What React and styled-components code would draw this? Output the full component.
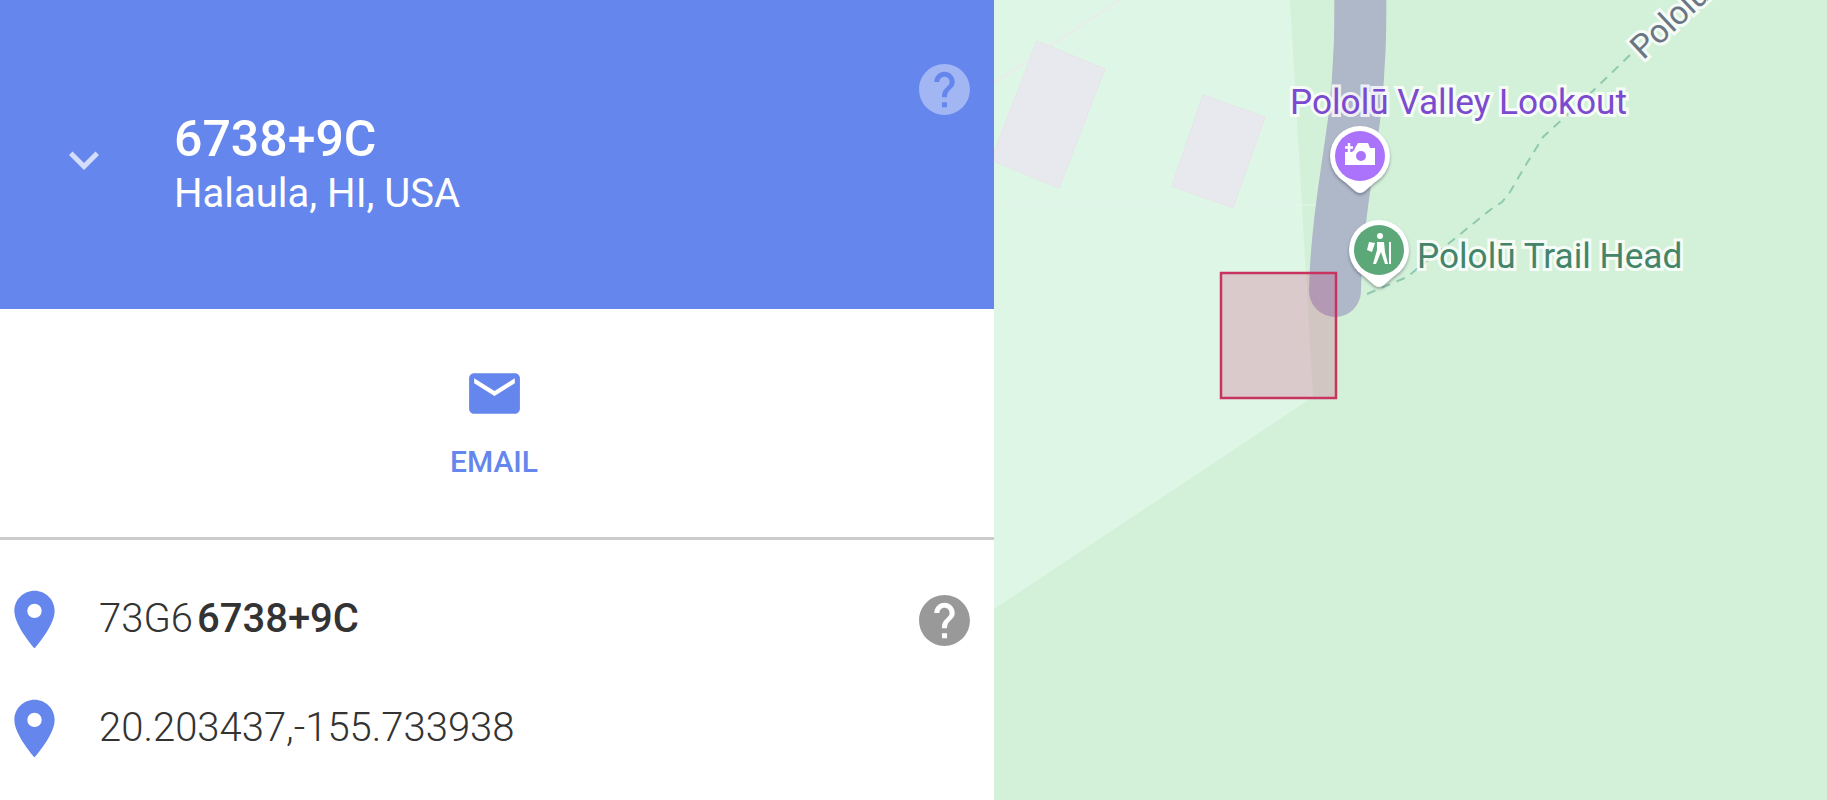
import React from "react"
import styled, { createGlobalStyle } from "styled-components"
import { MdEmail, MdExpandMore, MdHelp, MdPlace } from "react-icons/md"

const GlobalStyle = createGlobalStyle`
  html, body {
    margin: 0;
    padding: 0;
    background: #fff;
    overflow: hidden;
  }
  body {
    font-family: Roboto, "Liberation Sans", sans-serif;
  }
`

const Page = styled.div`
  display: flex;
  width: 1827px;
  height: 800px;
`

const Panel = styled.section`
  display: flex;
  flex-direction: column;
  flex: 0 0 994px;
  background: #fff;
`

const Header = styled.header`
  display: flex;
  align-items: center;
  height: 309px;
  background: #6586ec;
  color: #fff;
`

const Chevron = styled(MdExpandMore)`
  flex: none;
  margin: 10px 0 0 54px;
  color: rgba(255, 255, 255, 0.72);
`

const Titles = styled.div`
  flex: 1;
  margin: 20px 0 0 60px;
`

const Title = styled.h1`
  margin: 0;
  font-size: 50px;
  line-height: 58px;
  font-weight: 500;
`

const Subtitle = styled.div`
  font-size: 40px;
  line-height: 52px;
  font-weight: 400;
`

const Help = styled(MdHelp)`
  flex: none;
  margin-right: 19px;
  color: ${(p) => (p.$light ? "rgba(255, 255, 255, 0.4)" : "#999")};
  align-self: ${(p) => (p.$light ? "flex-start" : "center")};
  margin-top: ${(p) => (p.$light ? "59px" : "1px")};
`

const Actions = styled.div`
  display: flex;
  flex-direction: column;
  align-items: center;
  height: 231px;
  padding: 54px 6px 0 0;
  box-sizing: border-box;
  border-bottom: 3px solid #ccc;
`

const MailIcon = styled(MdEmail)`
  color: #6586ec;
`

const ActionLabel = styled.span`
  margin-top: 20px;
  color: #6586ec;
  font-size: 30px;
  line-height: 36px;
  font-weight: 500;
`

const Rows = styled.div`
  display: flex;
  flex-direction: column;
  padding-top: 25px;
`

const Row = styled.div`
  display: flex;
  align-items: center;
  height: 109px;
`

const RowPin = styled(MdPlace)`
  flex: none;
  color: #6586ec;
`

const RowText = styled.div`
  flex: 1;
  margin: 0 0 2px 30px;
  color: #333;
  font-size: 40px;
  font-weight: 300;
  white-space: nowrap;

  b {
    font-weight: 500;
    margin-left: 4px;
  }
`

const Map = styled.div`
  position: relative;
  flex: 1;
  height: 800px;
  overflow: hidden;
  background: #d3f1d9;
`

const MapDrawing = styled.svg`
  display: block;
  width: 833px;
  height: 800px;
`

const PinShadow = styled.g`
  filter: drop-shadow(0 2px 1.5px rgba(50, 50, 70, 0.4));
`

const MapLabel = styled.span`
  position: absolute;
  left: ${(p) => p.$x}px;
  top: ${(p) => p.$y}px;
  color: ${(p) => p.$color};
  font-size: ${(p) => p.$size}px;
  line-height: 36px;
  white-space: nowrap;
  -webkit-text-stroke: 6px rgba(255, 255, 255, 0.8);
  paint-order: stroke fill;
  transform-origin: 0 27px;
  transform: rotate(${(p) => p.$angle || 0}deg);
`

const MapPin = ({ cx, cy, color, children }) => (
  <g>
    <PinShadow>
      <circle cx={cx} cy={cy} r="30" fill="#fff" />
      <path
        d={`M${cx - 22} ${cy + 20} L${cx - 5} ${cy + 35} Q${cx} ${cy + 39} ${cx + 5} ${cy + 35} L${cx + 22} ${cy + 20} Z`}
        fill="#fff"
      />
    </PinShadow>
    <circle cx={cx} cy={cy} r="25" fill={color} />
    {children}
  </g>
)

const App = () => (
  <Page>
    <GlobalStyle />
    <Panel>
      <Header>
        <Chevron size={60} />
        <Titles>
          <Title>6738+9C</Title>
          <Subtitle>Halaula, HI, USA</Subtitle>
        </Titles>
        <Help size={61} $light />
      </Header>
      <Actions>
        <MailIcon size={61} />
        <ActionLabel>EMAIL</ActionLabel>
      </Actions>
      <Rows>
        <Row>
          <RowPin size={69} />
          <RowText>
            73G6<b>6738+9C</b>
          </RowText>
          <Help size={61} />
        </Row>
        <Row>
          <RowPin size={69} />
          <RowText>20.203437,-155.733938</RowText>
        </Row>
      </Rows>
    </Panel>
    <Map>
      <MapDrawing viewBox="994 0 833 800">
        {/* lighter ground on the left */}
        <path d="M994 0 H1290 L1313 397 L994 609 Z" fill="#def6e6" />
        <path d="M994 205 H1370" stroke="#e6f5ea" strokeWidth="1" />
        <path d="M994 83 L1120 0" stroke="#e9ece8" strokeWidth="2" />
        {/* buildings */}
        <path d="M1037 41 L1105 69 L1059 188 L991 160 Z" fill="#e8e9ef" stroke="#e8e4e8" />
        <path d="M1203 95 L1265 117 L1233 208 L1172 186 Z" fill="#e8e9ef" stroke="#e8e4e8" />
        {/* road */}
        <path
          d="M1360 -30 C1361 30 1360 70 1354 120 C1349 160 1336 230 1335 291"
          fill="none"
          stroke="#aeb8c8"
          strokeWidth="52"
          strokeLinecap="round"
        />
        {/* trail */}
        <path
          d="M1367 294 L1407 277 L1453 240 L1490 210 L1502 202 L1510 192 L1527 163 L1543 137 L1567 115 L1597 87 L1633 52"
          fill="none"
          stroke="#8fc9b0"
          strokeWidth="2"
          strokeDasharray="9 7"
        />
        {/* selected square */}
        <rect
          x="1221"
          y="273"
          width="115"
          height="125"
          fill="rgba(205, 30, 100, 0.2)"
          stroke="#c9335f"
          strokeWidth="2.500"
        />
        <MapPin cx={1360} cy={156} color="#ab73fb">
          <path
            d="M1345 152 H1352 A5 5 0 0 0 1355 148 L1358 143 H1368 L1370 148 H1375 V165 H1345 Z"
            fill="#fff"
          />
          <path d="M1349 143 V152 M1345 147.500 H1353" stroke="#fff" strokeWidth="2.500" />
          <circle cx="1361" cy="156" r="5" fill="#ab73fb" />
        </MapPin>
        <MapPin cx={1379} cy={250} color="#5ca878">
          <circle cx="1380" cy="236" r="3" fill="#fff" />
          <path d="M1369 242 L1375 243 L1372 252 L1367 250 Z" fill="#fff" />
          <path
            d="M1377 242 H1384 L1385 252 L1388 264 H1385 L1381 252 L1376 264 H1373 L1377 250 Z"
            fill="#fff"
          />
          <path d="M1390 242 V264" stroke="#fff" strokeWidth="2" />
        </MapPin>
      </MapDrawing>
      <MapLabel $x={296} $y={84} $size={35.200} $color="#7b4acf">
        Pololū Valley Lookout
      </MapLabel>
      <MapLabel $x={423} $y={238} $size={35.200} $color="#44856a">
        Pololū Trail Head
      </MapLabel>
      <MapLabel $x={648} $y={32} $size={33} $color="#6a7684" $angle={-43}>
        Pololū Trail
      </MapLabel>
    </Map>
  </Page>
)

export default App
